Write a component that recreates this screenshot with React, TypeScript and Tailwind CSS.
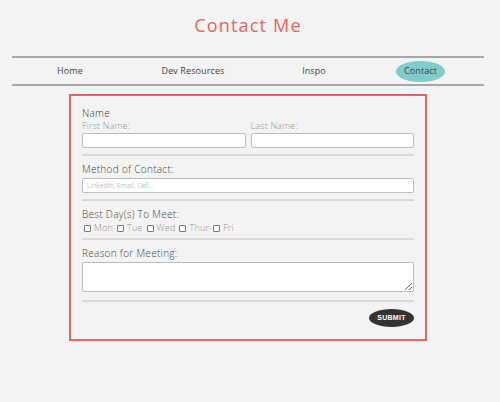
import React from 'react';

const navLinks = [
  { name: 'Home', active: false },
  { name: 'Dev Resources', active: false },
  { name: 'Inspo', active: false },
  { name: 'Contact', active: true },
];

const days = ['Mon', 'Tue', 'Wed', 'Thur', 'Fri'];

function Rule({ className = '' }: { className?: string }) {
  return <div className={`h-[2px] bg-[#dadada] ${className}`} />;
}

export default function App() {
  return (
    <div className="h-[402px] w-full bg-[#f3f3f3] font-['Open_Sans',sans-serif]">
      <div className="ml-[12px] w-[472px]">
        {/* Title */}
        <h1 className="pt-[13px] text-center text-[18px] leading-[24px] tracking-[1.2px] text-[#f0625e]">
          Contact Me
        </h1>

        {/* Nav */}
        <nav className="mt-[19px] grid h-[30px] grid-cols-[116px_130px_112px_101px] items-center border-y-2 border-[#a6a6a6]">
          {navLinks.map((link) => (
            <div key={link.name} className="flex justify-center">
              <a
                href="#"
                className={`text-[9px] leading-[12px] tracking-[0.1px] text-[#444] ${
                  link.active ? 'flex h-[21px] w-[49px] items-center justify-center rounded-[50%] bg-[#80cccb]' : ''
                }`}
              >
                {link.name}
              </a>
            </div>
          ))}
        </nav>

        {/* Form */}
        <form className="mx-auto mt-[8px] w-[358px] border-2 border-[#f0625e] px-[11px] pt-[10px] pb-[12px] font-light text-[#444]">
          <div className="text-[10px] leading-[14px] tracking-[0.3px]">Name</div>
          <div className="flex gap-[5px]">
            <div className="flex-1">
              <div className="text-[9px] leading-[12px] tracking-[0.2px] text-[#939393]">First Name:</div>
              <input className="mt-px block h-[15px] w-full rounded-[2px] border border-[#bdbdbd] bg-white" />
            </div>
            <div className="flex-1">
              <div className="text-[9px] leading-[12px] tracking-[0.2px] text-[#939393]">Last Name:</div>
              <input className="mt-px block h-[15px] w-full rounded-[2px] border border-[#bdbdbd] bg-white" />
            </div>
          </div>
          <Rule className="mt-[6px]" />

          <div className="mt-[6px] text-[10px] leading-[14px] tracking-[0.3px]">Method of Contact:</div>
          <input
            placeholder="LinkedIn, Email, Cell..."
            className="mt-[2px] block h-[15px] w-full rounded-[2px] border border-[#bdbdbd] bg-white px-[4px] text-[7px] placeholder:text-[#a0a0a0]"
          />
          <Rule className="mt-[6px]" />

          <div className="mt-[6px] text-[10px] leading-[14px] tracking-[0.3px]">Best Day(s) To Meet:</div>
          <div className="mt-[1px] flex items-center gap-[4px] pl-[2px] text-[9px] leading-[12px] tracking-[0.2px] text-[#939393]">
            {days.map((d) => (
              <label key={d} className="flex items-center gap-[3px]">
                <span className="inline-block h-[7px] w-[7px] rounded-[1px] border border-[#7a7a7a] bg-white" />
                {d}
              </label>
            ))}
          </div>
          <Rule className="mt-[4px]" />

          <div className="mt-[6px] text-[10px] leading-[14px] tracking-[0.3px]">Reason for Meeting:</div>
          <textarea className="mt-[2px] block h-[30px] w-full rounded-[2px] border border-[#bdbdbd] bg-white" />
          <Rule className="mt-[8px]" />

          <div className="mt-[7px] flex justify-end">
            <button
              type="button"
              className="h-[18px] w-[45px] rounded-[50%] bg-[#333] font-['Liberation_Sans',sans-serif] text-[7px] font-bold tracking-[0.3px] text-white"
            >
              SUBMIT
            </button>
          </div>
        </form>
      </div>
    </div>
  );
}
